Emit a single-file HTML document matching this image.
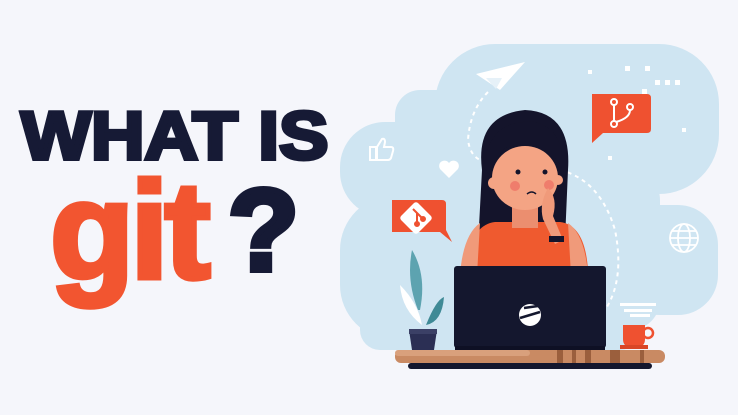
<!DOCTYPE html>
<html><head><meta charset="utf-8"><style>
html,body{margin:0;padding:0;}
body{width:738px;height:415px;overflow:hidden;background:#f5f6fb;position:relative;font-family:"Liberation Sans",sans-serif;}
.t{position:absolute;font-weight:bold;white-space:nowrap;line-height:1;}
</style></head><body>
<div class="t" style="left:21px;top:102px;font-size:68px;color:#161a35;-webkit-text-stroke:4px #161a35;transform:scaleX(1.09);transform-origin:left;">WHAT IS</div>
<div class="t" style="left:50px;top:162px;font-size:138px;color:#f25530;letter-spacing:-4px;-webkit-text-stroke:5px #f25530;">git</div>
<div class="t" style="left:228px;top:172px;font-size:116px;color:#161a35;-webkit-text-stroke:6px #161a35;">?</div>
<svg width="738" height="415" style="position:absolute;left:0;top:0" viewBox="0 0 738 415">
<g fill="#cfe5f2">
<rect x="435" y="44" width="284" height="150" rx="60"/>
<rect x="340" y="122" width="200" height="95" rx="45"/>
<rect x="395" y="90" width="100" height="60" rx="25"/>
<rect x="340" y="195" width="320" height="145" rx="55"/>
<rect x="620" y="205" width="98" height="110" rx="40"/>
<rect x="560" y="170" width="100" height="160" rx="30"/>
<rect x="360" y="280" width="280" height="70" rx="20"/>
</g>
<path d="M476 74 L525 62 L500 90 Z" fill="#fff"/>
<path d="M486 78 L496 89 L502 78Z" fill="#e6f1f8"/>
<path d="M488 92 Q470 110 468 140 Q470 155 480 160" stroke="#fff" stroke-width="2" stroke-dasharray="4 4" fill="none"/>
<path d="M560 170 Q600 180 615 230 Q625 280 605 310" stroke="#fff" stroke-width="2" stroke-dasharray="4 4" fill="none"/>
<g fill="#fff"><rect x="625" y="66" width="5" height="5"/><rect x="645" y="66" width="5" height="5"/><rect x="655" y="80" width="5" height="5"/><rect x="665" y="80" width="5" height="5"/><rect x="675" y="80" width="5" height="5"/><rect x="642" y="89" width="5" height="5"/><rect x="682" y="128" width="4" height="4"/><rect x="608" y="156" width="4" height="4"/><rect x="588" y="70" width="4" height="4"/></g>
<path d="M370 147 h6 v13 h-6z M377 147 l5 -8 q3 -1 3 3 l-1 5 h7 q3 0 2 4 l-2 7 q-1 2 -3 2 h-11z" fill="none" stroke="#fff" stroke-width="2"/>
<path d="M449 178 l-9 -9 a5 5 0 0 1 9 -6 a5 5 0 0 1 9 6z" fill="#fff"/>
<g fill="none" stroke="#fff" stroke-width="1.8"><circle cx="684" cy="238" r="14"/><ellipse cx="684" cy="238" rx="6" ry="14"/><line x1="670" y1="238" x2="698" y2="238"/><line x1="672" y1="231" x2="696" y2="231"/><line x1="672" y1="245" x2="696" y2="245"/></g>
<path d="M592 94 h55 q4 0 4 4 v31 q0 4 -4 4 h-44 l-11 10 z" fill="#ef5130"/>
<g stroke="#fff" stroke-width="2" fill="none"><circle cx="614" cy="102" r="3"/><circle cx="630" cy="107" r="3"/><circle cx="614" cy="124" r="3"/><path d="M614 105 v16 M630 110 q0 8 -14 12"/></g>
<path d="M392 200 h50 q4 0 4 4 v26 l6 12 l-12 -10 h-48 z" fill="#ef5130"/>
<rect x="404" y="206" width="24" height="24" transform="rotate(45 416 218)" fill="#fff" rx="3"/>
<g stroke="#ef5130" stroke-width="2" fill="#ef5130"><path d="M413 209 l10 10 M417 213 v10" fill="none"/><circle cx="417" cy="224" r="2"/><circle cx="423" cy="219" r="2"/></g>
<path d="M482 170 Q475 115 525 110 Q572 112 568 170 L565 240 L478 245 Z" fill="#14142b"/>
<path d="M478 240 L470 270 L490 270Z" fill="#14142b"/>
<path d="M465 270 Q470 225 495 222 L560 222 Q585 225 588 270 Z" fill="#ef5a2f"/>
<path d="M460 275 q3 -40 20 -52 l-3 52z M588 275 q-3 -40 -20 -52 l3 52z" fill="#f09a7a"/>
<rect x="512" y="200" width="26" height="28" fill="#eb8e6f"/>
<ellipse cx="525" cy="178" rx="33" ry="32" fill="#f4a484"/>
<path d="M484 168 Q488 118 535 122 Q565 130 562 168 Q545 135 505 148 Q496 158 490 175Z" fill="#14142b"/>
<circle cx="494" cy="183" r="6" fill="#f4a484"/>
<circle cx="558" cy="180" r="5" fill="#f4a484"/>
<circle cx="518" cy="172" r="2.5" fill="#14142b"/><circle cx="545" cy="172" r="2.5" fill="#14142b"/>
<circle cx="515" cy="186" r="5" fill="#ef7d6c"/><circle cx="549" cy="185" r="5" fill="#ef7d6c"/>
<path d="M527 194 q5 -4 9 0" stroke="#14142b" stroke-width="1.5" fill="none"/>
<path d="M548 188 q10 10 5 28 l10 24 l-8 4 l-12 -25 q-4 -15 5 -31z" fill="#f09a7a"/>
<rect x="549" y="236" width="15" height="6" fill="#14142b"/>
<path d="M418 310 q-12 -30 -6 -60 q15 25 8 60z" fill="#5da3b0"/>
<path d="M422 325 q-20 -15 -22 -40 q18 18 22 40z" fill="#fff"/>
<path d="M426 325 q10 -25 18 -28 q-2 25 -18 28z" fill="#3f8a96"/>
<path d="M409 330 h28 l-3 20 h-22z" fill="#2b2f54"/>
<rect x="409" y="329" width="28" height="5" fill="#3b4066"/>
<rect x="454" y="266" width="152" height="82" rx="3" fill="#14172e"/>
<circle cx="530" cy="315" r="11" fill="#fff"/>
<path d="M520 318 l20 -6 M524 308 l14 -2" stroke="#14172e" stroke-width="2.5"/>
<rect x="455" y="346" width="150" height="4" fill="#0e1024"/>
<g fill="#fff"><rect x="620" y="303" width="36" height="3"/><rect x="624" y="309" width="28" height="3"/><rect x="630" y="314" width="20" height="3"/></g>
<path d="M623 325 h22 v14 q0 8 -8 8 h-6 q-8 0 -8 -8z" fill="#ef5130"/>
<circle cx="648" cy="333" r="5" fill="none" stroke="#ef5130" stroke-width="2.5"/>
<rect x="620" y="345" width="28" height="4" fill="#d94626"/>
<rect x="395" y="350" width="270" height="13" rx="6" fill="#c98a63"/>
<rect x="395" y="350" width="135" height="6" rx="3" fill="#d9a07c"/>
<g fill="#9b5f3d"><rect x="557" y="350" width="6" height="13"/><rect x="572" y="350" width="4" height="13"/><rect x="585" y="350" width="6" height="13"/><rect x="610" y="350" width="10" height="13"/><rect x="640" y="350" width="4" height="13"/></g>
<rect x="408" y="363" width="244" height="6" rx="3" fill="#14172e"/>
</svg>
</body></html>
